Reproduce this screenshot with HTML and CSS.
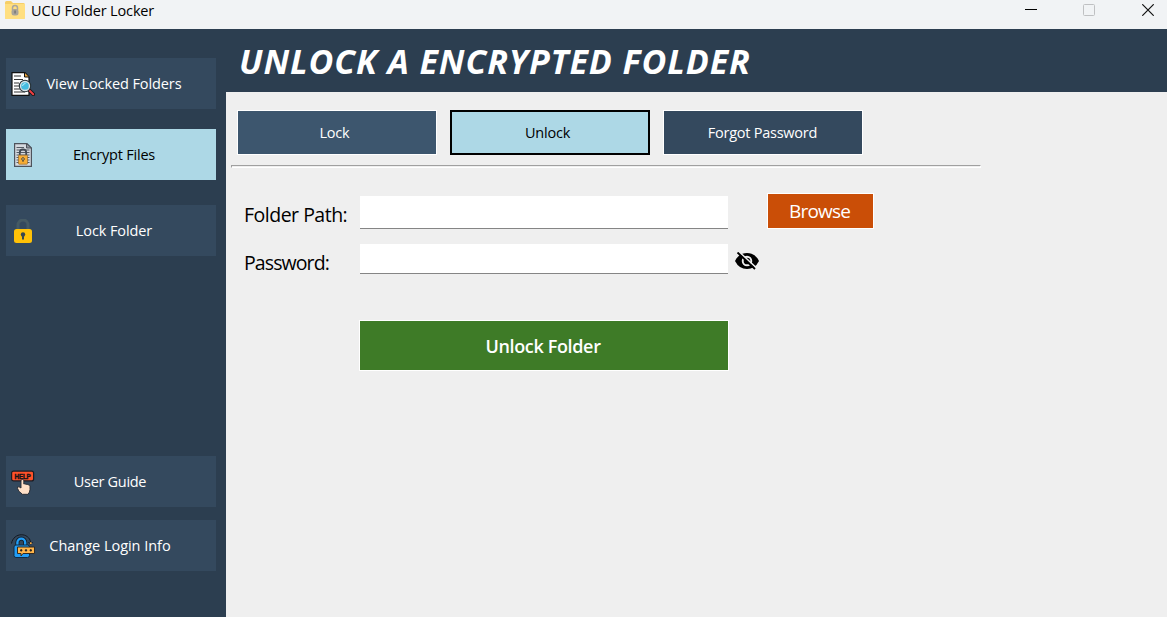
FILE: index.html
```html
<!DOCTYPE html>
<html lang="en">
<head>
<meta charset="utf-8">
<title>UCU Folder Locker</title>
<link rel="stylesheet" href="styles.css">
</head>
<body>
<div class="window">
  <header class="titlebar">
    <svg class="app-icon" width="20" height="18" viewBox="0 0 20 18"><path d="M0 1.500Q0 0 1.500 0H6L8 2H18.500Q20 2 20 3.500V16.500Q20 18 18.500 18H1.500Q0 18 0 16.500Z" fill="#f6cf68"/><path d="M0 3H20V16.500Q20 18 18.500 18H1.500Q0 18 0 16.500Z" fill="#ffdf80"/><path d="M7.500 9V7a2.500 2.500 0 0 1 5 0V9" fill="none" stroke="#aaa79f" stroke-width="1.500"/><rect x="6.500" y="8" width="7" height="6.500" rx="2.500" fill="#aaa599"/><rect x="9.300" y="9.500" width="1.500" height="3" fill="#777"/></svg>
    <span class="app-title">UCU Folder Locker</span>
    <div class="controls">
      <svg width="12" height="12" viewBox="0 0 12 12"><path d="M0 5.500H12" stroke="#000"/></svg>
      <svg width="12" height="12" viewBox="0 0 12 12"><rect x=".5" y=".5" width="11" height="11" rx="1" fill="none" stroke="#bfc0c2"/></svg>
      <svg width="12" height="12" viewBox="0 0 12 12"><path d="M.3.300 11.700 11.700M11.700.300.300 11.700" stroke="#111" stroke-width="1.200"/></svg>
    </div>
  </header>
  <div class="body">
    <nav class="sidebar">
      <button class="nav view">
        <svg width="24" height="24" viewBox="0 0 24 24"><path d="M1 .7H14L18 5V23.300H1Z" fill="#fff" stroke="#111" stroke-width="1.200"/><path d="M13.500.700V5H18" fill="#e8a33b" stroke="#111"/><path d="M3 4H10M3 7.500H12M3 11H8M3 14H8M3 17H9M3 20H14" stroke="#333" stroke-width="1.200"/><path d="M18 18 22.300 22.300" stroke="#111" stroke-width="3.600" stroke-linecap="round"/><path d="M18.500 18.500 22.200 22.200" stroke="#ed3f43" stroke-width="2" stroke-linecap="round"/><circle cx="14" cy="14" r="5.300" fill="#45bce0" stroke="#263238" stroke-width="1.800"/><circle cx="14" cy="14" r="4.500" fill="none" stroke="#d9e4e8" stroke-width="1.300"/><path d="M11.500 14a3 3 0 0 1 3-2.500" fill="none" stroke="#bdeffc"/></svg>
        <span>View Locked Folders</span>
      </button>
      <button class="nav encrypt active">
        <svg width="24" height="24" viewBox="0 0 24 24"><path d="M3.600.600H16L20.400 5V23.400H3.600Z" fill="#d5d9df" stroke="#4d535c" stroke-width="1.200"/><path d="M15.500.600V5H20.400Z" fill="#8e949d" stroke="#4d535c"/><path d="M5.500 4.500H13M5.500 7H18.500M5.500 9.500H18.500M5.500 12H18.500M5.500 14.500H18.500M5.500 17H18.500M5.500 19.500H18.500" stroke="#555c65"/><path d="M8.800 12V9.600a3.200 3.200 0 0 1 6.400 0V12" fill="none" stroke="#414953" stroke-width="1.800"/><rect x="7.500" y="12.200" width="9" height="9" rx=".6" fill="#f8ad35" stroke="#9b6c2a" stroke-width=".7"/><circle cx="12" cy="16" r="1.300" fill="#ffd483" stroke="#4f4937"/><path d="M12 17V19" stroke="#4f4937"/></svg>
        <span>Encrypt Files</span>
      </button>
      <button class="nav lock">
        <svg width="24" height="24" viewBox="0 0 24 24"><path d="M7 11V6a5 5 0 0 1 10 0v5" fill="none" stroke="#455a64" stroke-width="3"/><rect x="3" y="10" width="18" height="14" rx="2.500" fill="#ffc107"/><circle cx="12" cy="15.500" r="2.200" fill="#37474f"/><path d="M12 15V20.500" stroke="#37474f" stroke-width="2"/></svg>
        <span>Lock Folder</span>
      </button>
      <button class="nav guide">
        <svg width="24" height="25" viewBox="0 0 24 25"><rect x=".6" y="1.100" width="22" height="9.800" rx="2" fill="#ff5129" stroke="#1a1d24" stroke-width="1.200"/><text class="help" x="11.600" y="8.700" text-anchor="middle" textLength="16" lengthAdjust="spacingAndGlyphs">HELP</text><path d="M10 18V10.800a1.400 1.400 0 0 1 2.800 0V14q1.300-.8 2.200.4 1.300-.7 2 .4 1.700-.4 2 1.200v3.500q-.2 3-2 4.800H11.200Q10 22.500 8 21.500L6.500 18.300q-.5-2 1.500-1.500Z" fill="#ffe0c8" stroke="#242831" stroke-width=".9"/></svg>
        <span>User Guide</span>
      </button>
      <button class="nav login">
        <svg width="24" height="24" viewBox="0 0 24 24"><path d="M.5 9.500C2.500-2 18-2 19.700 8.500M17.500 8 19.700 10.500 21.500 8" fill="none" stroke="#131820" stroke-width="1"/><circle cx="19.800" cy="9.300" r="1" fill="#ffac3e"/><path d="M6.400 12V8.500a3.900 3.900 0 0 1 7.800 0V12" fill="none" stroke="#111c29" stroke-width="4"/><path d="M6.400 12V8.500a3.900 3.900 0 0 1 7.800 0V12" fill="none" stroke="#219df6" stroke-width="2.400"/><rect x="3" y="11" width="15.500" height="12.500" rx="2" fill="#219df6" stroke="#102c45"/><path d="M6.500 13H23.500V19.500H12L10 22V19.500H6.500Z" fill="#ffb54a" stroke="#322b23"/><path d="M9 16.300H11.400M13.800 16.300H16.200M18.600 16.300H21M10.200 15V17.600M15 15V17.600M19.800 15V17.600" stroke="#191b20"/></svg>
        <span>Change Login Info</span>
      </button>
    </nav>
    <main class="main">
      <h1 class="heading"><span>UNLOCK A ENCRYPTED FOLDER</span></h1>
      <div class="tabs">
        <button class="tab tab-lock"><span>Lock</span></button>
        <button class="tab tab-unlock"><span>Unlock</span></button>
        <button class="tab tab-forgot"><span>Forgot Password</span></button>
      </div>
      <div class="rule"></div>
      <form class="form">
        <div class="row path">
          <label for="path"><span class="l-path">Folder Path:</span></label>
          <input id="path" type="text">
          <button type="button" class="browse"><span>Browse</span></button>
        </div>
        <div class="row pass">
          <label for="password"><span class="l-pass">Password:</span></label>
          <input id="password" type="password">
          <svg class="eye" width="24" height="18" viewBox="0 0 24 18"><path d="M0 9Q4 1 12 1T24 9Q20 17 12 17T0 9Z" fill="#000"/><circle cx="12" cy="9" r="4.300" fill="none" stroke="#efefef" stroke-width="1.900"/><path d="M3.300-.8 21.300 15.800" stroke="#efefef" stroke-width="1.700"/><path d="M2.500.500 20 17" stroke="#000" stroke-width="1.900"/></svg>
        </div>
        <button type="button" class="submit"><span>Unlock Folder</span></button>
      </form>
    </main>
  </div>
</div>
</body>
</html>
```
FILE: styles.css
```css
* { box-sizing: border-box; }
body { margin: 0; overflow: hidden; font-family: "Open Sans", "Noto Sans", sans-serif; }
button { font: inherit; border: 0; border-radius: 0; padding: 0; margin: 0; }
span { white-space: nowrap; }
svg { flex: none; }
.window { width: 1167px; height: 617px; display: flex; flex-direction: column; background: #efefef; }
.titlebar { height: 29px; flex: none; display: flex; background: #f1f3f5; padding: 1px 13px 0 5px; }
.app-title { margin-left: 6px; font-size: 14.5px; line-height: 20px; letter-spacing: -.14px; color: #000; }
.controls { margin: 3px 0 0 auto; display: flex; gap: 47px 46px; }
.controls svg:last-child { margin-left: 1px; }
.body { flex: 1; display: flex; }
.sidebar { width: 226px; background: #2c3e50; padding: 29px 10px 0 6px; display: flex; flex-direction: column; }
.nav { width: 210px; height: 51px; flex: none; display: flex; align-items: center; padding-left: 5px; background: #34495e; color: #fff; font-size: 14.5px; letter-spacing: -.2px; }
.nav span { flex: 1; text-align: center; line-height: 20px; }
.nav svg { margin-top: 1px; }
.view span, .encrypt span, .lock span { padding-right: 23px; }
.guide span, .login span { padding-right: 31px; }
.view { letter-spacing: -.1px; }
.encrypt { margin-top: 20px; }
.lock { margin-top: 25px; letter-spacing: -.1px; }
.guide { margin-top: 200px; letter-spacing: -.3px; }
.login { margin-top: 13px; letter-spacing: -.03px; }
.help { font: 700 7px "Liberation Sans", sans-serif; fill: #161316; stroke: #161316; stroke-width: .4px; }
.active { background: #add8e6; color: #000; }
.main { flex: 1; }
.heading { margin: 0; height: 63px; background: #2c3e50; color: #fff; padding-left: 13px; font-size: 34px; line-height: 64px; font-style: italic; font-weight: 700; letter-spacing: .92px; }
.tabs { padding: 18px 0 0 11px; display: flex; gap: 13px; }
.tab { width: 200px; height: 45px; border: 1px solid #fff; color: #fff; font-size: 14.5px; letter-spacing: -.2px; padding-right: 5px; }
.tab-lock { background: #3d566e; }
.tab-unlock { background: #add8e6; border: 2px solid #000; color: #000; }
.tab-forgot { background: #34495e; padding-right: 1px; letter-spacing: -.25px; }
.rule { width: 750px; height: 3px; margin: 10px 0 0 5px; border: 1px solid #fff; border-top-color: #a0a0a0; border-left-color: #a0a0a0; }
.form { padding: 25px 0 0 18px; }
.row { display: flex; }
.row label { width: 116px; font-size: 19.5px; line-height: 28px; color: #000; }
.l-path { letter-spacing: -.5px; }
.l-pass { letter-spacing: -.9px; }
.row input { width: 368px; border: 0; border-bottom: 1px solid #858585; background: #fff; padding: 0 4px; outline: 0; }
.path { height: 51px; }
.path label { padding-top: 8px; }
.path input { height: 33px; margin-top: 3px; }
.browse { width: 107px; height: 36px; margin-left: 39px; border: 1px solid #fff; background: #ca4e07; color: #fff; font-size: 19px; letter-spacing: -.8px; padding-right: 2px; }
.pass { height: 76px; }
.pass label { padding-top: 5px; }
.pass input { height: 30px; }
.eye { margin: 8px 0 0 7px; }
.submit { display: block; width: 370px; height: 51px; margin-left: 115px; padding-right: 2px; border: 1px solid #fff; background: #3e7b27; color: #fff; font-size: 18px; font-weight: 600; letter-spacing: -.35px; }
```
